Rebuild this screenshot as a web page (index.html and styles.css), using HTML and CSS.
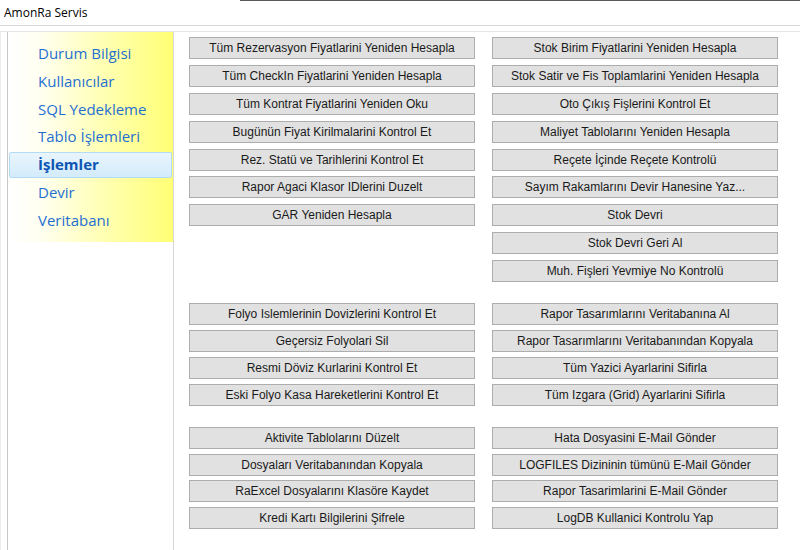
FILE: index.html
```html
<!DOCTYPE html>
<html lang="tr">
<head>
<meta charset="utf-8">
<title>AmonRa Servis</title>
<link rel="stylesheet" href="styles.css">
</head>
<body>
<header class="titlebar">AmonRa Servis</header>
<div class="window">
  <aside class="sidebar">
    <nav class="nav">
      <div class="nav-item">Durum Bilgisi</div>
      <div class="nav-item">Kullanıcılar</div>
      <div class="nav-item">SQL Yedekleme</div>
      <div class="nav-item">Tablo İşlemleri</div>
      <div class="nav-item active">İşlemler</div>
      <div class="nav-item">Devir</div>
      <div class="nav-item">Veritabanı</div>
    </nav>
  </aside>
  <main class="main">
    <section class="group group-1">
      <div class="col">
        <button class="btn">Tüm Rezervasyon Fiyatlarini Yeniden Hesapla</button>
        <button class="btn">Tüm CheckIn Fiyatlarini Yeniden Hesapla</button>
        <button class="btn">Tüm Kontrat Fiyatlarini Yeniden Oku</button>
        <button class="btn">Bugünün Fiyat Kirilmalarini Kontrol Et</button>
        <button class="btn">Rez. Statü ve Tarihlerini Kontrol Et</button>
        <button class="btn">Rapor Agaci Klasor IDlerini Duzelt</button>
        <button class="btn">GAR Yeniden Hesapla</button>
      </div>
      <div class="col">
        <button class="btn">Stok Birim Fiyatlarini Yeniden Hesapla</button>
        <button class="btn">Stok Satir ve Fis Toplamlarini Yeniden Hesapla</button>
        <button class="btn">Oto Çıkış Fişlerini Kontrol Et</button>
        <button class="btn">Maliyet Tablolarını Yeniden Hesapla</button>
        <button class="btn">Reçete İçinde Reçete Kontrolü</button>
        <button class="btn">Sayım Rakamlarını Devir Hanesine Yaz...</button>
        <button class="btn">Stok Devri</button>
        <button class="btn">Stok Devri Geri Al</button>
        <button class="btn">Muh. Fişleri Yevmiye No Kontrolü</button>
      </div>
    </section>
    <section class="group group-2">
      <div class="col">
        <button class="btn">Folyo Islemlerinin Dovizlerini Kontrol Et</button>
        <button class="btn">Geçersiz Folyolari Sil</button>
        <button class="btn">Resmi Döviz Kurlarini Kontrol Et</button>
        <button class="btn">Eski Folyo Kasa Hareketlerini Kontrol Et</button>
      </div>
      <div class="col">
        <button class="btn">Rapor Tasarımlarını Veritabanına Al</button>
        <button class="btn">Rapor Tasarımlarını Veritabanından Kopyala</button>
        <button class="btn">Tüm Yazici Ayarlarini Sifirla</button>
        <button class="btn">Tüm Izgara (Grid) Ayarlarini Sifirla</button>
      </div>
    </section>
    <section class="group group-3">
      <div class="col">
        <button class="btn">Aktivite Tablolarını Düzelt</button>
        <button class="btn">Dosyaları Veritabanından Kopyala</button>
        <button class="btn">RaExcel Dosyalarını Klasöre Kaydet</button>
        <button class="btn">Kredi Kartı Bilgilerini Şifrele</button>
      </div>
      <div class="col">
        <button class="btn">Hata Dosyasini E-Mail Gönder</button>
        <button class="btn">LOGFILES Dizininin tümünü E-Mail Gönder</button>
        <button class="btn">Rapor Tasarimlarini E-Mail Gönder</button>
        <button class="btn">LogDB Kullanici Kontrolu Yap</button>
      </div>
    </section>
  </main>
</div>
</body>
</html>
```
FILE: styles.css
```css
* { box-sizing: border-box; }

html, body {
  margin: 0;
  padding: 0;
  background: #ffffff;
  height: 100%;
  overflow: hidden;
}

body {
  font-family: "Open Sans", "Noto Sans", sans-serif;
  color: #000;
}

.titlebar {
  height: 26px;
  line-height: 25px;
  padding-left: 4px;
  font-size: 12px;
  border-bottom: 1px solid #d9d9d9;
  background: linear-gradient(to right, transparent 240px, #5a5a5a 240px) no-repeat top left / 100% 1px;
}

.window {
  margin-top: 5px;
  display: flex;
  height: calc(100% - 31px);
  border-top: 1px solid #e6e6e6;
  border-left: 1px solid #ececec;
}

.sidebar {
  margin-left: 6px;
  width: 167px;
  flex: none;
  border-left: 1px solid #c9c9c9;
  border-right: 1px solid #d6d6d6;
}

.nav {
  padding: 9px 0 8px;
  background: linear-gradient(to right, #ffffff 0%, #fffff0 20%, #ffffb0 60%, #ffff75 100%);
  display: flex;
  flex-direction: column;
  gap: 1.8px;
}

.nav-item {
  height: 26px;
  margin: 0 1px;
  padding-left: 28px;
  border: 1px solid transparent;
  border-radius: 2px;
  font-size: 15px;
  line-height: 23px;
  color: #1f6fd1;
}

.nav-item.active {
  background: linear-gradient(to bottom, #e9f5fd, #d3ebfb);
  border-color: #b4dbf5;
  font-weight: bold;
  color: #0e55b4;
}

.main {
  padding: 5px 0 0 15px;
  display: flex;
  flex-direction: column;
}

.group {
  display: flex;
  gap: 17px;
  align-items: flex-start;
}

.group-2, .group-3 { margin-top: 21px; }

.col {
  width: 286px;
  display: flex;
  flex-direction: column;
  gap: 5.9px;
}

.group-2 .col { gap: 5px; }
.group-3 .col { gap: 4.5px; }

.btn {
  height: 22px;
  width: 100%;
  margin: 0;
  padding: 0 4px;
  background: #e1e1e1;
  border: 1px solid #adadad;
  border-radius: 0;
  font-family: "Liberation Sans", Arial, sans-serif;
  font-size: 12px;
  color: #1a1a1a;
  text-align: center;
  white-space: nowrap;
}
```
